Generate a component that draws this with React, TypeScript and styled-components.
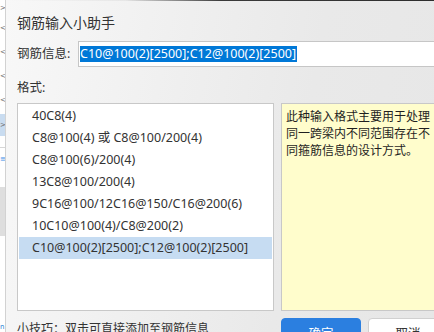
import React from 'react';
import styled, { createGlobalStyle } from 'styled-components';

const formats = [
    '40C8(4)',
    'C8@100(4) 或 C8@100/200(4)',
    'C8@100(6)/200(4)',
    '13C8@100/200(4)',
    '9C16@100/12C16@150/C16@200(6)',
    '10C10@100(4)/C8@200(2)',
    'C10@100(2)[2500];C12@100(2)[2500]',
];

const selectedIndex = 6;

// left-hand slice of the window behind the dialog
const stripRows: { h: number; glyph?: string; bg?: string; color?: string }[] = [
    { h: 16, glyph: '>' },
    { h: 24, glyph: '<' },
    { h: 24, glyph: '<' },
    { h: 24, glyph: '<' },
    { h: 24, glyph: '<' },
    { h: 2 },
    { h: 22, glyph: '>', bg: '#c9dcf0' },
    { h: 11 },
    { h: 1, bg: '#d6d6d6' },
    { h: 22, glyph: '≡', color: '#3a8ee6' },
    { h: 17 },
    { h: 49, bg: '#dedede' },
    { h: 86 },
    { h: 10, glyph: 'n', color: '#2a7fd4' },
];

const App = () => {
    return (
        <>
            <GlobalStyle />
            <Screen>
                <Strip>
                    {stripRows.map((row, i) => (
                        <StripRow key={i} $h={row.h} $bg={row.bg} $color={row.color}>
                            {row.glyph}
                        </StripRow>
                    ))}
                </Strip>
                <Dialog>
                    <TopEdge />
                    <Title>钢筋输入小助手</Title>
                    <InfoRow>
                        <FieldLabel>钢筋信息:</FieldLabel>
                        <InfoInput>
                            <Selection>C10@100(2)[2500];C12@100(2)[2500]</Selection>
                        </InfoInput>
                    </InfoRow>
                    <SectionLabel>格式:</SectionLabel>
                    <Body>
                        <FormatList>
                            {formats.map((item, i) => (
                                <FormatItem key={item} $selected={i === selectedIndex}>
                                    {item}
                                </FormatItem>
                            ))}
                        </FormatList>
                        <NoteBox>
                            此种输入格式主要用于处理同一跨梁内不同范围存在不同箍筋信息的设计方式。
                        </NoteBox>
                    </Body>
                    <Footer>
                        <Tip>小技巧：双击可直接添加至钢筋信息</Tip>
                        <Buttons>
                            <Button $primary>确定</Button>
                            <Button>取消</Button>
                        </Buttons>
                    </Footer>
                </Dialog>
            </Screen>
        </>
    );
};

export default App;

const GlobalStyle = createGlobalStyle`
    html, body {
        margin: 0;
        padding: 0;
        overflow: hidden;
        background: #ffffff;
    }
    * {
        box-sizing: border-box;
    }
`;

const Screen = styled.div`
    width: 434px;
    height: 332px;
    overflow: hidden;
    display: flex;
    font-family: 'Noto Sans', 'Noto Sans CJK SC', sans-serif;
    color: #333333;
`;

const Strip = styled.div`
    width: 5px;
    flex: none;
    display: flex;
    flex-direction: column;
    background: #ffffff;
    overflow: hidden;
`;

const StripRow = styled.div<{ $h: number; $bg?: string; $color?: string }>`
    height: ${(p) => p.$h}px;
    flex: none;
    background: ${(p) => p.$bg ?? 'transparent'};
    color: ${(p) => p.$color ?? '#6b6b6b'};
    font: 7px 'DejaVu Sans', sans-serif;
    line-height: ${(p) => p.$h}px;
    white-space: nowrap;
`;

const Dialog = styled.div`
    width: 480px;
    flex: none;
    height: 100%;
    display: flex;
    flex-direction: column;
    padding-left: 11px;
    border-left: 1px solid #d2d2d2;
    background: linear-gradient(100deg, #f8f8f8 0%, #efefef 35%, #e9e9e9 60%, #e6e6e6 100%);

    & > * {
        flex: none;
    }
`;

const TopEdge = styled.div`
    height: 1px;
    margin-left: -11px;
    background: linear-gradient(90deg, rgba(0, 0, 0, 0) 0%, rgba(0, 0, 0, 0.05) 25%, #3a3a3a 45%, #2a2a2a 100%);
`;

const Title = styled.div`
    height: 40px;
    padding-top: 12px;
    font-size: 14px;
    line-height: 20px;
    color: #333333;
`;

const InfoRow = styled.div`
    height: 26px;
    display: flex;
    align-items: stretch;
`;

const FieldLabel = styled.div`
    width: 61px;
    flex: none;
    font-size: 12.5px;
    line-height: 26px;
    color: #333333;
`;

const InfoInput = styled.div`
    flex: 1;
    background: #ffffff;
    border: 1px solid #c6c6c6;
    padding: 4px 1px;
    display: flex;
    align-items: center;
`;

const Selection = styled.span`
    background: #0078d7;
    color: #ffffff;
    font-size: 12.5px;
    line-height: 16px;
    height: 16px;
    padding-right: 1px;
    white-space: nowrap;
`;

const SectionLabel = styled.div`
    height: 36px;
    padding-top: 11px;
    font-size: 12.5px;
    line-height: 20px;
    color: #333333;
`;

const Body = styled.div`
    height: 208px;
    display: grid;
    grid-template-columns: 257px 1fr;
    column-gap: 7px;
`;

const FormatList = styled.div`
    background: #ffffff;
    border: 1px solid #c8c8c8;
    padding: 1px;
    display: flex;
    flex-direction: column;
`;

const FormatItem = styled.div<{ $selected?: boolean }>`
    height: 22px;
    padding-left: 13px;
    font-size: 12.5px;
    line-height: 22px;
    color: #333333;
    white-space: nowrap;
    background: ${(p) => (p.$selected ? '#c6dcf2' : 'transparent')};
`;

const NoteBox = styled.div`
    background: #fffdcc;
    border: 1px solid #c8c8c8;
    padding: 4px 1px 0 4px;
    font-size: 12px;
    line-height: 17px;
    color: #1f1f1f;
    width: 154px;
    word-break: break-all;
`;

const Footer = styled.div`
    display: grid;
    grid-template-columns: 257px 1fr;
    column-gap: 7px;
    padding-top: 7px;
`;

const Tip = styled.div`
    padding-top: 1px;
    font-size: 12px;
    line-height: 20px;
    color: #333333;
    white-space: nowrap;
`;

const Buttons = styled.div`
    display: flex;
    gap: 7px;
`;

const Button = styled.button<{ $primary?: boolean }>`
    width: 80px;
    height: 28px;
    border-radius: 4px;
    font-family: inherit;
    font-size: 12.5px;
    border: 1px solid ${(p) => (p.$primary ? '#2b7fe0' : '#d0d0d0')};
    background: ${(p) => (p.$primary ? '#2b7fe0' : '#ffffff')};
    color: ${(p) => (p.$primary ? '#ffffff' : '#333333')};
    padding: 0;
`;
